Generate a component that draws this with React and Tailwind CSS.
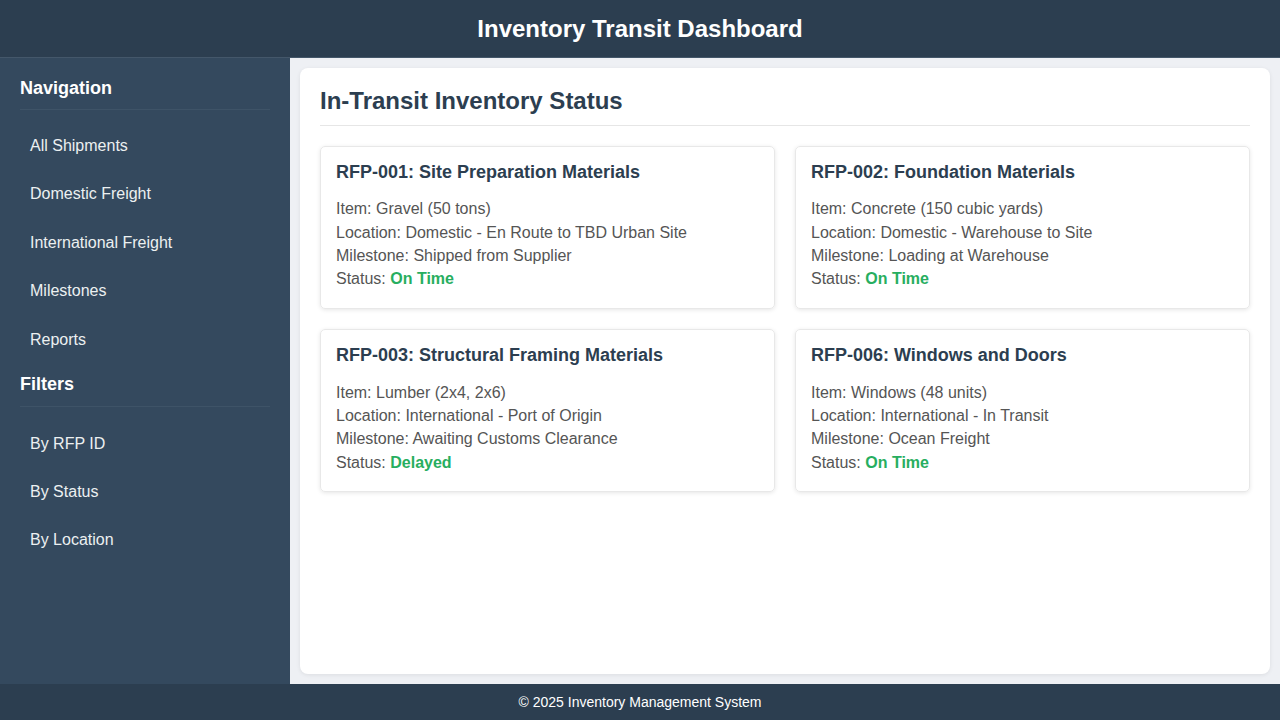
import React from "react";

const shipments = [
  { title: "RFP-001: Site Preparation Materials", item: "Gravel (50 tons)", location: "Domestic - En Route to TBD Urban Site", milestone: "Shipped from Supplier", status: "On Time" },
  { title: "RFP-002: Foundation Materials", item: "Concrete (150 cubic yards)", location: "Domestic - Warehouse to Site", milestone: "Loading at Warehouse", status: "On Time" },
  { title: "RFP-003: Structural Framing Materials", item: "Lumber (2x4, 2x6)", location: "International - Port of Origin", milestone: "Awaiting Customs Clearance", status: "Delayed" },
  { title: "RFP-006: Windows and Doors", item: "Windows (48 units)", location: "International - In Transit", milestone: "Ocean Freight", status: "On Time" },
];

function Section({ title, items, first }) {
  return (
    <div className={first ? "" : "mt-[14px]"}>
      <h3 className={"text-[18px] font-bold leading-[1.15] border-b border-[#3e5367] text-white " + (first ? "pb-[10px]" : "pb-[12px]")}>{title}</h3>
      <ul className={first ? "mt-[17px]" : "mt-[18px]"}>
        {items.map((it) => (
          <li key={it} className={"px-[10px] py-[10px] text-[16px] text-[#ecf0f1] " + (first ? "mb-[10px] leading-[18.6px]" : "mb-[9.6px] leading-[18.4px]")}>{it}</li>
        ))}
      </ul>
    </div>
  );
}

export default function App() {
  return (
    <div className="w-[1280px] h-[720px] flex flex-col overflow-hidden" style={{ fontFamily: '"Liberation Sans", Arial, sans-serif' }}>
      <header className="h-[58px] shrink-0 bg-[#2c3e50] flex items-center justify-center border-b border-[#44576a]">
        <h1 className="text-[24px] font-bold leading-[1.15] text-white">Inventory Transit Dashboard</h1>
      </header>
      <div className="flex flex-1 min-h-0">
        <aside className="w-[290px] shrink-0 bg-[#34495e] p-[20px]">
          <Section first title="Navigation" items={["All Shipments", "Domestic Freight", "International Freight", "Milestones", "Reports"]} />
          <Section title="Filters" items={["By RFP ID", "By Status", "By Location"]} />
        </aside>
        <main className="flex-1 bg-[#eef0f4] p-[10px] flex">
          <div className="flex-1 bg-white rounded-[8px] shadow-[0_1px_4px_rgba(0,0,0,0.08)] px-[20px] pt-[19px] pb-[20px]">
            <h2 className="text-[24px] font-bold leading-[1.15] text-[#2c3e50] pb-[10px] border-b border-[#e6e6e6] mb-[20px]">In-Transit Inventory Status</h2>
            <div className="grid grid-cols-2 gap-[20px]">
              {shipments.map((s) => (
                <div key={s.title} className="border border-[#e8e8e8] rounded-[5px] shadow-[0_1px_4px_rgba(0,0,0,0.1)] px-[15px] pt-[15px] pb-[19px]">
                  <h3 className="text-[18px] font-bold leading-[1.15] text-[#2c3e50] mb-[18px]">{s.title}</h3>
                  <div className="flex flex-col gap-[5px] text-[16px] leading-[1.15] text-[#555555]">
                    <p>Item: {s.item}</p>
                    <p>Location: {s.location}</p>
                    <p>Milestone: {s.milestone}</p>
                    <p>Status: <span className="font-bold text-[#27ae60]">{s.status}</span></p>
                  </div>
                </div>
              ))}
            </div>
          </div>
        </main>
      </div>
      <footer className="h-[36px] shrink-0 bg-[#2c3e50] flex items-center justify-center text-[14px] text-white">
        © 2025 Inventory Management System
      </footer>
    </div>
  );
}
